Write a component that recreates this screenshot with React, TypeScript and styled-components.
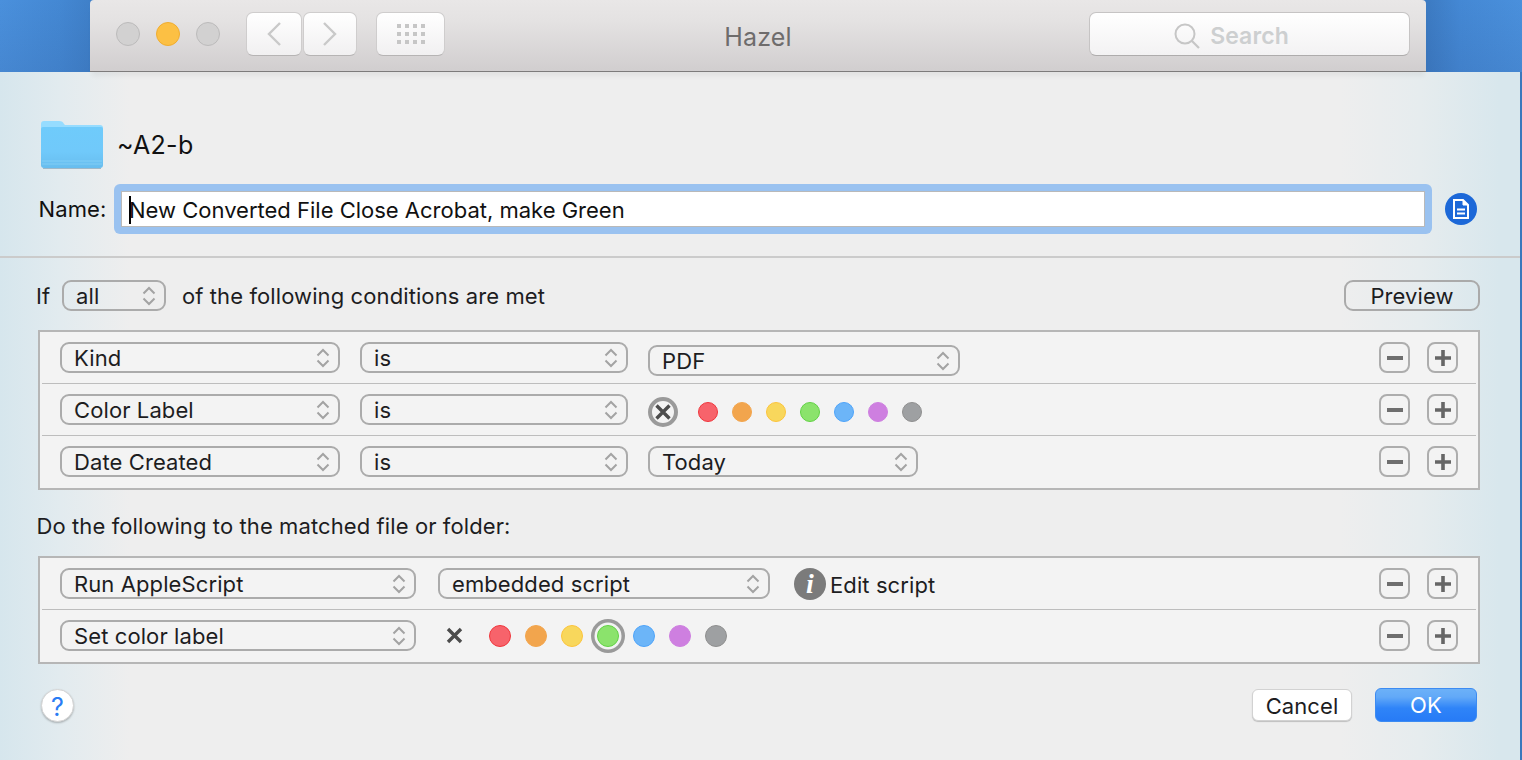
import React from "react";
import styled, { createGlobalStyle } from "styled-components";

const Global = createGlobalStyle`
  html, body { margin: 0; padding: 0; overflow: hidden; background: #eee; }
  * { box-sizing: border-box; }
  #root { width: 1522px; height: 760px; }
`;

const FONT = `Inter, "Noto Sans", sans-serif`;

const Page = styled.div`
  width: 1522px;
  height: 760px;
  overflow: hidden;
  display: flex;
  flex-direction: column;
  font-family: ${FONT};
  color: #1d1d1f;
  font-size: 22px;
  letter-spacing: 0.1px;
`;

const Desktop = styled.div`
  height: 72px;
  flex: none;
  padding: 0 96px 0 90px;
  background:
    linear-gradient(180deg, rgba(40, 70, 130, 0) 0, rgba(40, 70, 130, 0.12) 100%),
    linear-gradient(90deg, #4a90dc 0, #4488d3 60px, #3f80c9 90px, #3d7cc4 1430px, #4488d4 1460px, #4a90dc 1522px);
`;

const TitleBar = styled.header`
  position: relative;
  z-index: 2;
  height: 72px;
  display: flex;
  align-items: center;
  padding: 0 16px 3px 26px;
  border-radius: 4px 4px 0 0;
  border-bottom: 1px solid #7d7b7b;
  background: linear-gradient(180deg, #e9e7e7 0, #e4e2e2 30%, #d1cecf 100%);
  box-shadow: 0 6px 5px -2px rgba(0, 0, 0, 0.05);
`;

const Light = styled.span<{ $on?: boolean }>`
  width: 24px;
  height: 24px;
  border-radius: 50%;
  margin-right: 16px;
  flex: none;
  background: ${(p) => (p.$on ? "#fcc044" : "#d2d1d1")};
  border: 1px solid ${(p) => (p.$on ? "#f0ad30" : "#bcbbbb")};
`;

const ToolButton = styled.div<{ $w: number; $gap: number }>`
  width: ${(p) => p.$w}px;
  height: 44px;
  margin-left: ${(p) => p.$gap}px;
  flex: none;
  display: flex;
  align-items: center;
  justify-content: center;
  border-radius: 7px;
  border: 1px solid #cfcdcd;
  border-bottom-color: #b6b4b4;
  background: linear-gradient(180deg, #ffffff 0, #f1f0f1 100%);
`;

const Title = styled.div`
  position: absolute;
  left: 0;
  right: 0;
  top: 22px;
  text-align: center;
  font-size: 25px;
  line-height: 30px;
  letter-spacing: 0.2px;
  color: #6e6c6c;
  pointer-events: none;
`;

const SearchBox = styled.div`
  width: 321px;
  height: 44px;
  margin-left: auto;
  flex: none;
  display: flex;
  align-items: center;
  justify-content: center;
  gap: 10px;
  padding: 3px 36px 0 0;
  border-radius: 7px;
  border: 1px solid #c6c4c4;
  border-bottom-color: #aeacac;
  background: linear-gradient(180deg, #ffffff 0, #f3f2f3 100%);
  color: #cdcfd0;
  font-size: 23px;
  font-weight: 600;
`;

const Sheet = styled.main`
  flex: 1;
  display: flex;
  flex-direction: column;
  border-right: 2px solid #3a78bc;
  background: linear-gradient(90deg, #d6e6ed 0, #e2ebef 60px, #eeeeee 130px, #eeeeee 1340px, #e6ecee 1420px, #d8e7ed 1500px);
`;

const FolderRow = styled.div`
  margin-top: 48px;
  height: 49px;
  padding-left: 41px;
  display: flex;
  align-items: center;
  gap: 14px;
  font-size: 25px;
  letter-spacing: 0.3px;
  color: #111;
`;

const NameRow = styled.div`
  margin-top: 15px;
  height: 50px;
  padding-left: 38.5px;
  display: flex;
  align-items: center;
`;

const NameLabel = styled.label`
  width: 75.5px;
  flex: none;
  color: #111;
`;

const FocusRing = styled.div`
  width: 1318px;
  height: 50px;
  flex: none;
  padding: 7px;
  border-radius: 6px;
  background: #9ac2f0;
`;

const NameInput = styled.div`
  height: 36px;
  padding: 1px 0 0 7px;
  display: flex;
  align-items: center;
  white-space: nowrap;
  background: #fff;
  border: 1px solid #b9b9b9;
  color: #111;
  letter-spacing: 0;
`;

const Caret = styled.span`
  width: 2px;
  height: 28px;
  margin-right: -2px;
  flex: none;
  background: #000;
`;

const DocButton = styled.div`
  width: 32px;
  height: 32px;
  margin-left: 13px;
  flex: none;
  display: flex;
  align-items: center;
  justify-content: center;
  border-radius: 50%;
  background: #1c68d8;
`;

const Divider = styled.hr`
  margin: 22px 0 0;
  height: 2px;
  border: 0;
  background: #cbcbcb;
`;

const IfRow = styled.div`
  margin-top: 22px;
  height: 31px;
  padding: 0 40px 0 36px;
  display: flex;
  align-items: center;
`;

const IfWord = styled.span`
  width: 26px;
  flex: none;
`;

const IfText = styled.span`
  margin-left: 16px;
`;

const PreviewButton = styled.div`
  width: 136px;
  height: 31px;
  margin-left: auto;
  flex: none;
  display: flex;
  align-items: center;
  justify-content: center;
  border: 2px solid #aaaaaa;
  border-radius: 9px;
`;

const Panel = styled.section<{ $top: number }>`
  margin: ${(p) => p.$top}px 40px 0 38px;
  border: 2px solid #b6b6b6;
  background: #f3f3f3;
`;

const Row = styled.div<{ $gap: number }>`
  height: 52px;
  margin: 0 2px;
  padding: 10px 18px 0 18px;
  display: flex;
  align-items: flex-start;
  gap: ${(p) => p.$gap}px;
  border-bottom: 1px solid #bdbdbd;
  &:last-child {
    height: 52px;
    border-bottom: 0;
  }
`;

const SelectBox = styled.div<{ $w: number; $drop?: number }>`
  width: ${(p) => p.$w}px;
  height: 31px;
  margin-top: ${(p) => p.$drop ?? 0}px;
  flex: none;
  padding: 0 8px 0 12px;
  display: flex;
  align-items: center;
  justify-content: space-between;
  border: 2px solid #ababab;
  border-radius: 9px;
`;

const Stepper = styled.svg`
  width: 14px;
  height: 20px;
  flex: none;
`;

const RowActions = styled.div`
  margin-left: auto;
  display: flex;
  gap: 17px;
`;

const SquareButton = styled.div`
  width: 31px;
  height: 31px;
  display: flex;
  align-items: center;
  justify-content: center;
  border: 2px solid #adadad;
  border-radius: 8px;
`;

const ClearRing = styled.div`
  width: 30px;
  height: 30px;
  margin-top: 3px;
  flex: none;
  display: flex;
  align-items: center;
  justify-content: center;
  border: 4px solid #9a9a9a;
  border-radius: 50%;
`;

const DotRow = styled.div<{ $gap: number; $left: number; $top: number }>`
  margin-left: ${(p) => p.$left}px;
  margin-top: ${(p) => p.$top}px;
  display: flex;
  gap: ${(p) => p.$gap}px;
  flex: none;
`;

const Dot = styled.span<{ $fill: string; $edge: string; $size: number; $picked?: boolean }>`
  width: ${(p) => p.$size}px;
  height: ${(p) => p.$size}px;
  border-radius: 50%;
  background: ${(p) => p.$fill};
  border: 1.5px solid ${(p) => p.$edge};
  box-shadow: ${(p) => (p.$picked ? "0 0 0 2.5px #f3f3f3, 0 0 0 6px #9a9a9a" : "none")};
`;

const InfoGroup = styled.div`
  margin-left: 2px;
  height: 32px;
  display: flex;
  align-items: center;
  gap: 4px;
`;

const InfoBadge = styled.span`
  width: 32px;
  height: 32px;
  flex: none;
  display: flex;
  align-items: center;
  justify-content: center;
  border-radius: 50%;
  background: #7b7b7b;
  color: #fff;
  font-family: "Liberation Serif", serif;
  font-style: italic;
  font-weight: 700;
  font-size: 28px;
`;

const InfoText = styled.span`
  padding-top: 2px;
`;

const ClearGlyph = styled.svg`
  width: 17px;
  height: 17px;
  flex: none;
  margin: 7px -2px 0 8px;
`;

const DoLine = styled.div`
  margin-top: 23px;
  height: 26px;
  line-height: 26px;
  padding-left: 36.5px;
`;

const Footer = styled.footer`
  margin-top: 24px;
  height: 34px;
  padding: 0 43px 0 41px;
  display: flex;
  align-items: center;
`;

const HelpButton = styled.div`
  width: 33px;
  height: 33px;
  padding-top: 4px;
  display: flex;
  align-items: center;
  justify-content: center;
  border-radius: 50%;
  background: #fff;
  border: 1px solid #d4d4d4;
  box-shadow: 0 1px 2px rgba(0, 0, 0, 0.25);
  color: #2a7cf4;
  font-size: 25px;
  font-weight: 400;
`;

const CancelButton = styled.div`
  width: 100px;
  height: 32px;
  margin-left: auto;
  padding-top: 1px;
  display: flex;
  align-items: center;
  justify-content: center;
  border-radius: 6px;
  background: #fff;
  border: 1px solid #d2d2d2;
  box-shadow: 0 1px 1px rgba(0, 0, 0, 0.2);
`;

const OkButton = styled.div`
  width: 102px;
  height: 34px;
  margin-left: 23px;
  display: flex;
  align-items: center;
  justify-content: center;
  border-radius: 6px;
  border: 1px solid #3c8bf2;
  color: #fff;
  background: linear-gradient(180deg, #6cb1f8 0, #62a9f8 25%, #2f84f8 60%, #277bf6 100%);
`;

const Chevrons = () => (
  <Stepper viewBox="0 0 14 20">
    <path d="M1.5 7.5 7 2l5.5 5.5M1.5 12.5 7 18l5.5-5.5" fill="none" stroke="#a3a3a3" strokeWidth="2" />
  </Stepper>
);

const Select = ({ w, drop, children }: { w: number; drop?: number; children: React.ReactNode }) => (
  <SelectBox $w={w} $drop={drop}>
    <span>{children}</span>
    <Chevrons />
  </SelectBox>
);

const Actions = () => (
  <RowActions>
    <SquareButton>
      <svg width="16" height="16" viewBox="0 0 16 16"><rect x="0" y="6" width="16" height="4" fill="#6e6e6e" /></svg>
    </SquareButton>
    <SquareButton>
      <svg width="16" height="16" viewBox="0 0 16 16"><path d="M0 6.2h6.2V0h3.6v6.2H16v3.6H9.8V16H6.2V9.8H0z" fill="#666" /></svg>
    </SquareButton>
  </RowActions>
);

const COLORS = [
  ["#f7636b", "#f0363c"],
  ["#f2a54d", "#f2a54d"],
  ["#f8d75c", "#fcc43c"],
  ["#8be36c", "#62d245"],
  ["#6cb5f8", "#4ea4fa"],
  ["#ce7fe0", "#ce7fe0"],
  ["#9ea0a2", "#8f8f8f"],
];

const Cross = ({ size, sw }: { size: number; sw: number }) => (
  <svg width={size} height={size} viewBox="0 0 16 16">
    <path d="M1.5 1.5l13 13M14.5 1.5l-13 13" stroke="#4c4c4c" strokeWidth={sw} fill="none" />
  </svg>
);

export default function App() {
  return (
    <Page>
      <Global />
      <Desktop>
        <TitleBar>
          <Light />
          <Light $on />
          <Light />
          <ToolButton $w={56} $gap={10}>
            <svg width="16" height="26" viewBox="0 0 16 26"><path d="M14 2 3 13l11 11" fill="none" stroke="#c9c9c9" strokeWidth="2.4" /></svg>
          </ToolButton>
          <ToolButton $w={54} $gap={1}>
            <svg width="16" height="26" viewBox="0 0 16 26"><path d="M2 2l11 11L2 24" fill="none" stroke="#c9c9c9" strokeWidth="2.4" /></svg>
          </ToolButton>
          <ToolButton $w={69} $gap={19}>
            <svg width="28" height="20" viewBox="0 0 28 20" fill="#c6c6c6">
              {[0, 8, 16].map((y) =>
                [0, 8, 16, 24].map((x) => <rect key={`${x}-${y}`} x={x} y={y} width="4" height="4" />)
              )}
            </svg>
          </ToolButton>
          <Title>Hazel</Title>
          <SearchBox>
            <svg width="26" height="26" viewBox="0 0 26 26">
              <circle cx="11" cy="11" r="9.5" fill="none" stroke="#c6c6c6" strokeWidth="2" />
              <path d="M18 18l7 7" stroke="#c6c6c6" strokeWidth="2.2" />
            </svg>
            <span>Search</span>
          </SearchBox>
        </TitleBar>
      </Desktop>
      <Sheet>
        <FolderRow>
          <svg width="62" height="49" viewBox="0 0 62 49">
            <defs>
              <linearGradient id="fb" x1="0" y1="0" x2="0" y2="1">
                <stop offset="0" stopColor="#6fcbfb" />
                <stop offset="0.6" stopColor="#70c9fa" />
                <stop offset="1" stopColor="#68bdee" />
              </linearGradient>
            </defs>
            <path d="M0 4a3 3 0 0 1 3-3h15c3 0 4 1 5 3l1 1h35a3 3 0 0 1 3 3v8H0z" fill="#96dcff" />
            <path d="M0 9a2 2 0 0 1 2-2h58a2 2 0 0 1 2 2v36a3 3 0 0 1-3 3H3a3 3 0 0 1-3-3z" fill="url(#fb)" />
            <path d="M1 41h60M1 44h60" stroke="#8bd3f8" strokeWidth="1" opacity="0.7" />
            <path d="M2 48.5h58" stroke="#9fb8c8" strokeWidth="1" />
          </svg>
          <span>~A2-b</span>
        </FolderRow>
        <NameRow>
          <NameLabel>Name:</NameLabel>
          <FocusRing>
            <NameInput>
              <Caret />
              New Converted File Close Acrobat, make Green
            </NameInput>
          </FocusRing>
          <DocButton>
            <svg width="16" height="20" viewBox="0 0 16 20">
              <path d="M1 1h9l5 5v13H1z" fill="none" stroke="#fff" strokeWidth="2" />
              <path d="M10 1v5h5" fill="#fff" stroke="#fff" strokeWidth="1" />
              <path d="M4 10.5h8M4 14.5h8" stroke="#fff" strokeWidth="2" />
            </svg>
          </DocButton>
        </NameRow>
        <Divider />
        <IfRow>
          <IfWord>If</IfWord>
          <Select w={104}>all</Select>
          <IfText>of the following conditions are met</IfText>
          <PreviewButton>Preview</PreviewButton>
        </IfRow>
        <Panel $top={19}>
          <Row $gap={20}>
            <Select w={280}>Kind</Select>
            <Select w={268}>is</Select>
            <Select w={312} drop={3}>PDF</Select>
            <Actions />
          </Row>
          <Row $gap={20}>
            <Select w={280}>Color Label</Select>
            <Select w={268}>is</Select>
            <ClearRing><Cross size={16} sw={3.4} /></ClearRing>
            <DotRow $gap={14} $left={0} $top={8}>
              {COLORS.map(([f, e]) => <Dot key={f} $fill={f} $edge={e} $size={20} />)}
            </DotRow>
            <Actions />
          </Row>
          <Row $gap={20}>
            <Select w={280}>Date Created</Select>
            <Select w={268}>is</Select>
            <Select w={270}>Today</Select>
            <Actions />
          </Row>
        </Panel>
        <DoLine>Do the following to the matched file or folder:</DoLine>
        <Panel $top={17}>
          <Row $gap={22}>
            <Select w={356}>Run AppleScript</Select>
            <Select w={332}>embedded script</Select>
            <InfoGroup>
              <InfoBadge>i</InfoBadge>
              <InfoText>Edit script</InfoText>
            </InfoGroup>
            <Actions />
          </Row>
          <Row $gap={22}>
            <Select w={356}>Set color label</Select>
            <ClearGlyph viewBox="0 0 17 17">
              <path d="M2 2l13 13M15 2 2 15" stroke="#4c4c4c" strokeWidth="3.4" fill="none" />
            </ClearGlyph>
            <DotRow $gap={14} $left={6} $top={5}>
              {COLORS.map(([f, e], i) => <Dot key={f} $fill={f} $edge={e} $size={22} $picked={i === 3} />)}
            </DotRow>
            <Actions />
          </Row>
        </Panel>
        <Footer>
          <HelpButton>?</HelpButton>
          <CancelButton>Cancel</CancelButton>
          <OkButton>OK</OkButton>
        </Footer>
      </Sheet>
    </Page>
  );
}
